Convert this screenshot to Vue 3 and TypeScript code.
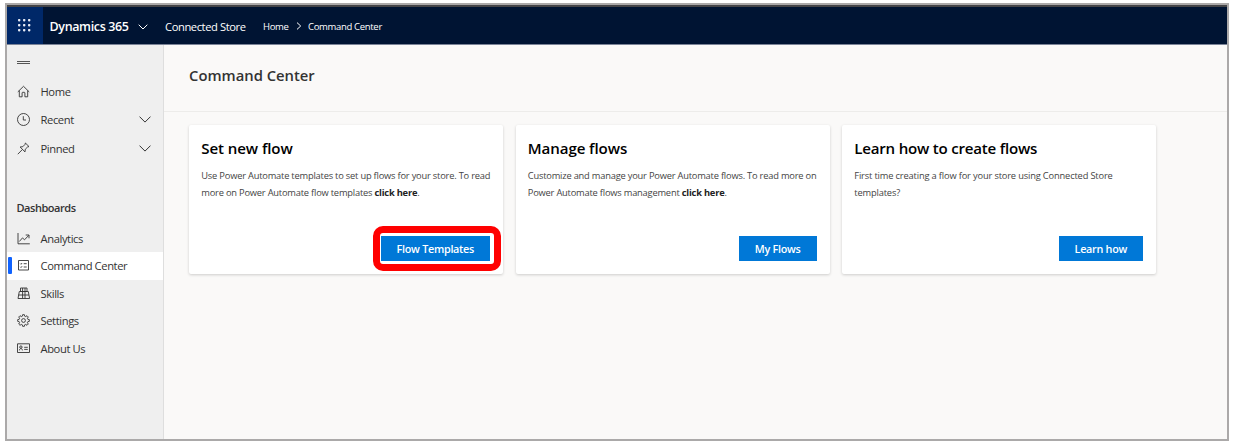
<script setup lang="ts">
interface NavItem {
  id: string
  label: string
  expandable?: boolean
  active?: boolean
}

interface FlowCard {
  id: string
  title: string
  lines: string[]
  link?: string
  action: string
  highlighted?: boolean
}

const primaryNav: NavItem[] = [
  { id: 'home', label: 'Home' },
  { id: 'recent', label: 'Recent', expandable: true },
  { id: 'pinned', label: 'Pinned', expandable: true },
]

const dashboards: NavItem[] = [
  { id: 'analytics', label: 'Analytics' },
  { id: 'command', label: 'Command Center', active: true },
  { id: 'skills', label: 'Skills' },
  { id: 'settings', label: 'Settings' },
  { id: 'about', label: 'About Us' },
]

const cards: FlowCard[] = [
  {
    id: 'set',
    title: 'Set new flow',
    lines: [
      'Use Power Automate templates to set up flows for your store. To read',
      'more on Power Automate flow templates ',
    ],
    link: 'click here',
    action: 'Flow Templates',
    highlighted: true,
  },
  {
    id: 'manage',
    title: 'Manage flows',
    lines: [
      'Customize and manage your Power Automate flows. To read more on',
      'Power Automate flows management ',
    ],
    link: 'click here',
    action: 'My Flows',
  },
  {
    id: 'learn',
    title: 'Learn how to create flows',
    lines: ['First time creating a flow for your store using Connected Store', 'templates?'],
    action: 'Learn how',
  },
]

const icons: Record<string, string> = {
  home: 'M.8 6.900 6.500 1.300l5.700 5.600M2.300 5.600v6.200h2.800V8a.7.7 0 0 1 .7-.7h1.400a.7.7 0 0 1 .7.7v3.800h2.800V5.600',
  recent: 'M6.500.5a6 6 0 1 0 0 12 6 6 0 0 0 0-12M6.300 3.200v3.800h2.700',
  pinned: 'M8.400 1l3.600 3.600-1.300.3-2.400 2.300-.3 2.700L3.100 5l2.700-.3L8.100 2.300zM5.400 7.500.8 12.200',
  analytics: 'M1 1v10.800h11.800M2.300 9.500l3.200-3.600 2 1.900 4.300-4.500M8.700 3h3.300v3.300',
  command: 'M1.500 1.500h10v9.500h-10zM3.300 4.600l.7.7 1.100-1.300M6.700 4.700h3M3.300 7.800l.7.7 1.100-1.300M6.700 8h3',
  skills: 'M3.500 1h6.500v3.500H3.500zM5.600 1v10.500M8 1v10.500M2.300 4.500h9M1.500 8h10.500M2.300 4.500 1 11.500h11.600l-1.300-7',
  settings:
    'M5.600.7h1.800l.3 1.500 1 .4 1.300-.9 1.300 1.300-.9 1.300.4 1 1.500.3v1.800l-1.500.3-.4 1 .9 1.300-1.300 1.300-1.300-.9-1 .4-.3 1.500H5.600l-.3-1.500-1-.4-1.300.9-1.300-1.300.9-1.300-.4-1L.7 7.400V5.600l1.500-.3.4-1L1.700 3 3 1.700l1.300.9 1-.4zM6.500 4.600a1.900 1.900 0 1 0 0 3.800 1.900 1.900 0 0 0 0-3.800',
  about: 'M.5 1.800h12v8.700H.5zM2.400 8.400c.1-1.300.6-1.800 1.500-1.800s1.400.5 1.500 1.800M3.900 3.900a1.200 1.200 0 1 0 0 2.400 1.200 1.200 0 0 0 0-2.400M7.200 5.300h3.600M7.200 7.400h3.600',
}
</script>

<template>
  <div class="window">
    <header class="topbar">
      <div class="waffle">
        <svg width="13" height="13" viewBox="0 0 13 13" fill="#e6ebf5">
          <template v-for="r in 3" :key="r">
            <rect v-for="c in 3" :key="c" :x="c * 5 - 5" :y="r * 5 - 5" width="2.4" height="2.4" rx=".8" />
          </template>
        </svg>
      </div>
      <span class="brand">Dynamics 365</span>
      <svg class="brand-chevron" width="10" height="6" viewBox="0 0 10 6"><path d="M.7.7 5 5 9.300.7" /></svg>
      <span class="product">Connected Store</span>
      <span class="crumb crumb-home">Home</span>
      <svg class="crumb-chevron" width="6" height="8" viewBox="0 0 6 8"><path d="M1 .6 4.700 4 1 7.400" /></svg>
      <span class="crumb crumb-page">Command Center</span>
    </header>
    <div class="body">
      <nav class="sidebar">
        <div class="burger"></div>
        <div v-for="item in primaryNav" :key="item.id" class="item" :class="'item-' + item.id">
          <svg class="icon" viewBox="0 0 13 13"><path :d="icons[item.id]" /></svg>
          <span class="label">{{ item.label }}</span>
          <svg v-if="item.expandable" class="expand" viewBox="0 0 12 7"><path d="M.5.6 6 6.100 11.500.6" /></svg>
        </div>
        <h2 class="group">Dashboards</h2>
        <div
          v-for="item in dashboards"
          :key="item.id"
          class="item"
          :class="['item-' + item.id, { active: item.active }]"
        >
          <svg class="icon" viewBox="0 0 13 13"><path :d="icons[item.id]" /></svg>
          <span class="label">{{ item.label }}</span>
        </div>
      </nav>
      <main class="main">
        <div class="heading"><h1>Command Center</h1></div>
        <div class="cards">
          <section v-for="card in cards" :key="card.id" class="card" :class="'card-' + card.id">
            <h3>{{ card.title }}</h3>
            <p>
              <span v-for="(line, i) in card.lines" :key="i" class="line"
                >{{ line }}<template v-if="card.link && i === card.lines.length - 1"><b>{{ card.link }}</b>.</template></span
              >
            </p>
            <div class="actions">
              <button type="button" :class="{ highlighted: card.highlighted }">{{ card.action }}</button>
            </div>
          </section>
        </div>
      </main>
    </div>
  </div>
</template>

<style>
body {
  background: #fff;
}
</style>

<style scoped>
.window {
  box-sizing: border-box;
  width: 1224px;
  height: 438px;
  margin: 3px 0 0 5px;
  border: 2px solid #aba9a9;
  background: #faf9f8;
  font-family: 'Open Sans', 'Noto Sans', sans-serif;
  display: flex;
  flex-direction: column;
  overflow: hidden;
}
svg path {
  fill: none;
  stroke: currentColor;
}
.topbar {
  box-sizing: border-box;
  height: 40px;
  flex: none;
  border-top: 2px solid #444447;
  border-bottom: 1px solid #7b8498;
  background: #001433;
  color: #fff;
  display: flex;
  align-items: center;
  white-space: nowrap;
}
.waffle {
  width: 36px;
  height: 37px;
  background: #002868;
  display: flex;
  align-items: center;
  justify-content: center;
}
.waffle svg {
  margin-left: -2px;
}
.brand {
  margin: 1px 0 0 6.500px;
  width: 88.500px;
  font-size: 12.500px;
  font-weight: 600;
  letter-spacing: -0.36px;
}
.brand-chevron {
  width: 10px;
  margin-top: 2px;
}
.product {
  margin: 1px 0 0 17px;
  width: 98px;
  font-size: 11.200px;
  letter-spacing: -0.42px;
}
.crumb {
  margin-top: 2px;
  font-size: 9.500px;
  letter-spacing: -0.32px;
}
.crumb-home {
  width: 33px;
}
.crumb-page {
  margin-left: 6px;
}
.body {
  flex: 1;
  display: flex;
}
.sidebar {
  box-sizing: border-box;
  width: 157px;
  border-right: 1px solid #dedede;
  background: #efefef;
  color: #333;
}
.burger {
  width: 13px;
  height: 1px;
  margin: 16px 0 13px 10px;
  border-top: 1px solid #555;
  border-bottom: 1px solid #555;
}
.item {
  position: relative;
  display: flex;
  align-items: center;
  height: 27.500px;
  padding: 0 12px 0 9.500px;
  font-size: 11.200px;
  letter-spacing: -0.4px;
}
.item-home,
.item-recent {
  height: 28px;
}
.item-pinned {
  height: 30px;
}
.icon {
  width: 13px;
  height: 13px;
  margin-right: 11px;
  stroke-width: 0.9;
}
.label {
  flex: 1;
}
.expand {
  width: 12px;
  height: 7px;
  stroke-width: 1;
}
.active {
  background: #fff;
}
.active::before {
  content: '';
  position: absolute;
  left: 1px;
  top: 5px;
  width: 4px;
  height: 17px;
  border-radius: 1px;
  background: #0f62fe;
}
.group {
  margin: 37px 0 8.500px 9.500px;
  font-size: 11px;
  line-height: 16px;
  font-weight: 600;
  letter-spacing: -0.46px;
}
.main {
  flex: 1;
}
.heading {
  box-sizing: border-box;
  height: 67px;
  padding: 17px 0 0 25px;
  border-bottom: 1px solid #edecea;
}
h1 {
  margin: 0;
  font-size: 14.800px;
  line-height: 26px;
  font-weight: 600;
  color: #333;
}
.cards {
  display: flex;
  gap: 12.500px;
  padding: 13px 0 0 25px;
}
.card {
  box-sizing: border-box;
  width: 314px;
  height: 148.500px;
  padding: 11px 13px 0 12.300px;
  border-radius: 2px;
  background: #fff;
  box-shadow: 0 1px 3px rgba(0, 0, 0, 0.18);
}
h3 {
  margin: 0;
  font-size: 15.100px;
  line-height: 24px;
  font-weight: 600;
  color: #000;
  letter-spacing: -0.1px;
}
.card-learn h3 {
  letter-spacing: -0.22px;
}
p {
  margin: 7px 0 0;
  font-size: 9.300px;
  line-height: 17px;
  color: #444;
  letter-spacing: -0.2px;
}
.card-learn p {
  letter-spacing: -0.16px;
}
.line {
  display: block;
  white-space: nowrap;
}
b {
  font-weight: 700;
  color: #222;
}
.actions {
  display: flex;
  justify-content: flex-end;
  margin-top: 35px;
}
button {
  position: relative;
  height: 25px;
  padding: 0 16px;
  border: 0;
  background: #0078d7;
  color: #fff;
  font: 600 10.800px 'Open Sans', 'Noto Sans', sans-serif;
  letter-spacing: -0.28px;
  white-space: nowrap;
}
.highlighted::after {
  content: '';
  box-sizing: border-box;
  position: absolute;
  right: -10.500px;
  top: -10px;
  width: 128px;
  height: 45px;
  border: 7px solid #f00;
  border-radius: 10px;
}
</style>
